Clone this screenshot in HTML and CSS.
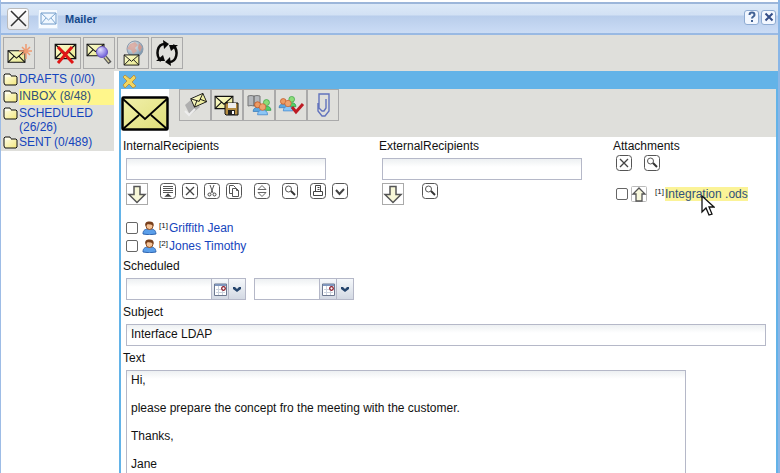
FILE: index.html
```html
<!DOCTYPE html>
<html lang="en">
<head>
<meta charset="utf-8">
<title>Mailer</title>
<link rel="stylesheet" href="styles.css">
</head>
<body>
<svg class="defs" aria-hidden="true">
  <defs>
    <linearGradient id="paper" x1="0" y1="0" x2="1" y2="1"><stop offset="0" stop-color="#fbfbd0"/><stop offset="1" stop-color="#e9e98e"/></linearGradient>
    <linearGradient id="fold" x1="0" y1="0" x2="1" y2="1"><stop offset="0" stop-color="#fffff0"/><stop offset="1" stop-color="#f3e77c"/></linearGradient>
    <linearGradient id="big" x1="0" y1="0" x2="1" y2="1"><stop offset="0" stop-color="#f1f0ac"/><stop offset="1" stop-color="#dfde78"/></linearGradient>
    <radialGradient id="glass" cx=".35" cy=".3" r=".7"><stop offset="0" stop-color="#e4e0ff"/><stop offset="1" stop-color="#7263dc"/></radialGradient>
    <radialGradient id="earth" cx=".35" cy=".3" r=".7"><stop offset="0" stop-color="#f0f5f7"/><stop offset="1" stop-color="#7c98ae"/></radialGradient>
  </defs>
  <symbol id="mail" viewBox="0 0 18 13"><path d="M1 1h16v11H1z" fill="url(#paper)" stroke="#111"/><path d="M1 1l8 7 8-7M1 12l6-6M17 12l-6-6" fill="none" stroke="#111"/></symbol>
  <symbol id="folder" viewBox="0 0 15 13"><path d="M1 10V2l1-1h5l1 2h5l1 1v7l-1 1H2z" fill="url(#fold)" stroke="#111"/><path d="M2 3h6" stroke="#fff"/></symbol>
  <symbol id="box" viewBox="0 0 16 16"><rect x=".5" y=".5" width="15" height="15" rx="3" fill="#fff" stroke="#555"/></symbol>
  <symbol id="cross" viewBox="0 0 16 16"><use href="#box"/><path d="M4 4l8 8M12 4l-8 8" stroke="#444" stroke-width="1.3"/></symbol>
  <symbol id="find" viewBox="0 0 16 16"><use href="#box"/><circle cx="6.500" cy="6" r="3" fill="#fff" stroke="#555"/><path d="M9 8l4 4" stroke="#333" stroke-width="2"/></symbol>
  <symbol id="down" viewBox="0 0 22 22"><rect x=".5" y=".5" width="21" height="21" fill="#fff" stroke="#aaa"/><path d="M8 3.500h6v8h5l-8 8-8-8h5z" fill="#f8f8d8" stroke="#555" stroke-width="1.500"/></symbol>
  <symbol id="person" viewBox="0 0 15 14"><path d="M1 13c0-4 2-5 6.500-5s6 1 6.500 5q-6.500 1.500-13 0z" fill="#5b9fea" stroke="#2f65b0"/><circle cx="7.500" cy="5" r="3.500" fill="#f5c397" stroke="#8c4e22"/><path d="M3.500 5C2 1 6 0 8 .5 12 .5 12 4 11.500 5 10 3 7 4 6 3z" fill="#78401c"/></symbol>
  <symbol id="cal" viewBox="0 0 13 13"><path d="M.5 1h12v11.500H.5z" fill="#fff" stroke="#6d7890"/><path d="M1 2h11" stroke="#7f96bd" stroke-width="2"/><path d="M2 6.500h9M2 9.500h9M4.500 3v9M8.500 3v9" stroke="#ccd3de"/><circle cx="9.500" cy="5.500" r="1.800" fill="#fff" stroke="#8c1c2b" stroke-width="1.300"/></symbol>
  <symbol id="chev" viewBox="0 0 10 7"><path d="M1 1h2l2 2 2-2h2v2L5 6 1 3z" fill="#26466e"/></symbol>
  <symbol id="users" viewBox="0 0 18 16"><g stroke-width=".7"><path d="M1 12c0-5 8-5 8 0z" fill="#5ca7e0" stroke="#397aba"/><circle cx="5" cy="6" r="2.700" fill="#ed9b63" stroke="#bf5424"/><path d="M10 11c0-5 7-5 7 0z" fill="#52cf67" stroke="#289a47"/><circle cx="13" cy="4" r="2.700" fill="#8bdc78" stroke="#40a54a"/><path d="M5 15c0-6 9-6 9 0z" fill="#8bc6f6" stroke="#4387cd"/><circle cx="9.500" cy="8" r="3" fill="#efa36f" stroke="#c76635"/></g></symbol>
</svg>

<div class="window">
  <header class="titlebar">
    <button class="close-tab" aria-label="Close tab"><svg width="21" height="21" viewBox="0 0 21 21"><path d="M3 3l15 15M18 3L3 18" stroke="#333" stroke-width="1.500"/></svg></button>
    <span class="app-icon"><svg width="17" height="13" viewBox="0 0 17 13"><path d="M1 1h15v11H1z" fill="#eff7ff" stroke="#6e9ac9"/><path d="M1 1l7.500 7L16 1M1 12l5-6M16 12l-5-6" fill="none" stroke="#7da7d1"/></svg></span>
    <h1>Mailer</h1>
    <button class="tool" aria-label="Help"><svg width="14" height="14" viewBox="0 0 14 14"><path d="M4.500 5c0-3.200 5-3.200 5 0 0 1.500-2.500 1.500-2.500 3.500M7 10v2" fill="none" stroke="#426295" stroke-width="2"/></svg></button>
    <button class="tool" aria-label="Close"><svg width="14" height="14" viewBox="0 0 14 14"><path d="M3.500 3.500l7 7M10.500 3.500l-7 7" stroke="#344e88" stroke-width="2"/></svg></button>
  </header>

  <nav class="toolbar" aria-label="Mail">
    <button class="first" aria-label="New mail"><svg width="30" height="30" viewBox="0 0 30 30"><use href="#mail" x="3" y="11" width="19" height="15"/><path d="M22 6v15M15 13h13M18 9l8 8M26 9l-8 8" stroke="#ef9a70" stroke-width="1.500"/></svg></button>
    <button aria-label="Delete mail"><svg width="30" height="30" viewBox="0 0 30 30"><use href="#mail" x="4" y="5" width="23" height="17"/><path d="M8 9l15 16M22 9L8 25" stroke="#df1515" stroke-width="3"/></svg></button>
    <button aria-label="Search mail"><svg width="30" height="30" viewBox="0 0 30 30"><use href="#mail" x="2" y="5" width="19" height="14"/><path d="M21 19l5 6" stroke="#555" stroke-width="4"/><path d="M21 19l4 5" stroke="#d6d0a0" stroke-width="1.500"/><circle cx="18" cy="14" r="5.500" fill="url(#glass)" stroke="#6c58bf"/></svg></button>
    <button aria-label="Fetch mail"><svg width="30" height="30" viewBox="0 0 30 30"><circle cx="17" cy="11" r="8" fill="url(#earth)" stroke="#8b9bad"/><path d="M12 6l5-2 3 3-3 3 2 3-4 3-2-4-4-1z" fill="#d9a297" opacity=".8"/><path d="M21 5l3 4-2 5-2-4z" fill="#ce9a90"/><use href="#mail" x="5" y="16" width="17" height="12"/></svg></button>
    <button aria-label="Refresh"><svg width="30" height="30" viewBox="0 0 30 30"><path d="M13 6C5 6 3 17 9 23M17 24c8 0 10-11 4-17" fill="none" stroke="#080808" stroke-width="2.500"/><path d="M11 2l6 4-5 5zM4 23h9l-2-6zM19 28l-6-4 5-5zM26 7h-9l2 6z" fill="#080808"/></svg></button>
  </nav>

  <div class="workspace">
    <aside>
      <ul class="folders">
        <li><svg width="15" height="13"><use href="#folder"/></svg><a href="#drafts">DRAFTS (0/0)</a></li>
        <li><svg width="15" height="13"><use href="#folder"/></svg><a class="current" href="#inbox">INBOX (8/48)</a></li>
        <li><svg width="15" height="13"><use href="#folder"/></svg><a href="#scheduled">SCHEDULED (26/26)</a></li>
        <li><svg width="15" height="13"><use href="#folder"/></svg><a href="#sent">SENT (0/489)</a></li>
      </ul>
    </aside>

    <main>
      <div class="pane-head"><button class="plain" aria-label="Close message"><svg width="15" height="15" viewBox="0 0 15 15"><path d="M3 1l5 4 4-4 2 3-4 4 4 4-3 2-4-4-4 4-2-3 4-4-4-4z" fill="#f3d660" stroke="#b2954c"/></svg></button></div>
      <div class="message-bar">
        <span class="big-mail"><svg width="48" height="36" viewBox="0 0 48 36"><rect x="1.500" y="1.500" width="45" height="32" rx="1" fill="url(#big)" stroke="#000" stroke-width="2.500"/><path d="M2 3l22 20L46 3M2 33l16-14M46 33L30 19" fill="none" stroke="#000" stroke-width="1.800"/></svg></span>
        <div class="actions">
          <button aria-label="Send"><svg width="30" height="30" viewBox="0 0 30 30"><path d="M5 15l8-7 7 9-10 8z" fill="#aaa" opacity=".9"/><path d="M5 21l4 4 6-6" fill="none" stroke="#eee" stroke-width="2"/><g transform="rotate(-24 18 10)"><use href="#mail" x="11" y="5" width="15" height="11"/></g></svg></button>
          <button aria-label="Save"><svg width="30" height="30" viewBox="0 0 30 30"><use href="#mail" x="2" y="5" width="20" height="15"/><path d="M13 13h13v12H14l-1-1z" fill="#b58d42" stroke="#111"/><path d="M16 13h8v5h-8z" fill="#eee"/><path d="M16 20h7v5h-7z" fill="#222"/><path d="M20 21h2v3h-2z" fill="#fff"/></svg></button>
          <button aria-label="Address book"><svg width="30" height="30" viewBox="0 0 30 30"><path d="M4 6q3-1 6 0 3-1 6 0v10q-3-1-6 0-3-1-6 0z" fill="#b5b8bc" stroke="#777"/><path d="M10 6v10" stroke="#555"/><use href="#users" x="8" y="8" width="20" height="18"/></svg></button>
          <button aria-label="Check recipients"><svg width="30" height="30" viewBox="0 0 30 30"><use href="#users" x="2" y="5" width="19" height="17"/><path d="M16 17l4 5 7-8" fill="none" stroke="#bd1b24" stroke-width="3"/></svg></button>
          <button aria-label="Attach file"><svg width="30" height="30" viewBox="0 0 30 30"><path d="M10 13v8l4 5h3l4-5V4H11v14l3 3h2l2-3V9" fill="none" stroke="#6273bd" stroke-width="1.400"/></svg></button>
        </div>
      </div>

      <form class="message">
        <div class="address-grid">
          <section>
            <label for="internal">InternalRecipients</label>
            <input class="field" id="internal" type="text">
            <div class="mini-tools">
              <button type="button" class="down" aria-label="Add internal recipient"><svg width="22" height="22"><use href="#down"/></svg></button>
              <span class="group">
                <button type="button" aria-label="List"><svg width="16" height="16" viewBox="0 0 16 16"><use href="#box"/><path d="M3 3.500h10M3 5.500h10M3 7.500h10M3 9.500h10" stroke="#555"/><path d="M4 14l4-4 4 4z" fill="#444" stroke="#fff" stroke-width=".5"/></svg></button>
                <button type="button" aria-label="Remove"><svg width="16" height="16"><use href="#cross"/></svg></button>
                <button type="button" aria-label="Cut"><svg width="16" height="16" viewBox="0 0 16 16"><use href="#box"/><path d="M6 2l3 8M10 2l-3 8" stroke="#555"/><circle cx="5.500" cy="11.500" r="1.500" fill="#fff" stroke="#444"/><circle cx="10.500" cy="11.500" r="1.500" fill="#fff" stroke="#444"/></svg></button>
                <button type="button" aria-label="Copy"><svg width="16" height="16" viewBox="0 0 16 16"><use href="#box"/><path d="M3.500 2.500h4l2 2v6h-6z" fill="#fff" stroke="#555"/><path d="M6.500 5.500h4l2 2v6h-6zM10.500 5.500v2h2" fill="#fff" stroke="#555"/></svg></button>
              </span>
              <button type="button" aria-label="Sort"><svg width="16" height="16" viewBox="0 0 16 16"><use href="#box"/><path d="M4 6.500l4-4 4 4zM4 9.500l4 4 4-4z" fill="#fff" stroke="#666"/></svg></button>
              <button type="button" aria-label="Search internal recipients"><svg width="16" height="16"><use href="#find"/></svg></button>
              <span class="group">
                <button type="button" aria-label="Print"><svg width="16" height="16" viewBox="0 0 16 16"><use href="#box"/><path d="M5.500 8.500v-6h5v6M3.500 8.500h9v4h-9zM7.500 4.500h2M7.500 6.500h2" fill="none" stroke="#444"/></svg></button>
                <button type="button" aria-label="Confirm"><svg width="16" height="16" viewBox="0 0 16 16"><use href="#box"/><path d="M4 7l3.500 4L12 6" fill="none" stroke="#444" stroke-width="2"/></svg></button>
              </span>
            </div>
            <ul class="people">
              <li><input type="checkbox" id="p1"><svg width="15" height="14"><use href="#person"/></svg><small>[1]</small><label for="p1">Griffith Jean</label></li>
              <li><input type="checkbox" id="p2"><svg width="15" height="14"><use href="#person"/></svg><small>[2]</small><label for="p2">Jones Timothy</label></li>
            </ul>
          </section>
          <section>
            <label for="external">ExternalRecipients</label>
            <input class="field" id="external" type="text">
            <div class="mini-tools external">
              <button type="button" class="down" aria-label="Add external recipient"><svg width="22" height="22"><use href="#down"/></svg></button>
              <button type="button" aria-label="Search external recipients"><svg width="16" height="16"><use href="#find"/></svg></button>
            </div>
          </section>
          <section class="attachments">
            <h2>Attachments</h2>
            <div class="mini-tools">
              <button type="button" aria-label="Remove attachment"><svg width="16" height="16"><use href="#cross"/></svg></button>
              <button type="button" aria-label="Search attachments"><svg width="16" height="16"><use href="#find"/></svg></button>
            </div>
            <div class="file">
              <input type="checkbox" aria-label="Select Integration .ods">
              <button type="button" class="plain" aria-label="Upload"><svg width="16" height="16" viewBox="0 0 16 16"><rect x=".5" y=".5" width="15" height="15" rx="1" fill="#fff" stroke="#bbb"/><path d="M8 2l6 6h-3v7H5V8H2z" fill="#f8f8dc" stroke="#555" stroke-width="1.300"/></svg></button>
              <small>[1]</small>
              <a href="#file">Integration .ods<svg class="pointer" width="14" height="21" viewBox="0 0 14 21"><path d="M1 1v16l4-4 3 7 3-1-3-7h5z" fill="#fff" stroke="#111" stroke-width="1.300"/></svg></a>
            </div>
          </section>
        </div>

        <label for="from-date">Scheduled</label>
        <div class="schedule">
          <div class="combo date"><input id="from-date" type="text"><button type="button" aria-label="Pick date"><svg width="13" height="13"><use href="#cal"/></svg></button><button type="button" aria-label="Date options"><svg width="10" height="7"><use href="#chev"/></svg></button></div>
          <div class="combo time"><input aria-label="Scheduled time" type="text"><button type="button" aria-label="Pick time"><svg width="13" height="13"><use href="#cal"/></svg></button><button type="button" aria-label="Time options"><svg width="10" height="7"><use href="#chev"/></svg></button></div>
        </div>
        <label for="subject">Subject</label>
        <input class="field subject" id="subject" type="text" value="Interface LDAP">
        <label for="body">Text</label>
        <textarea class="field" id="body">Hi,

please prepare the concept fro the meeting with the customer.

Thanks,

Jane</textarea>
      </form>
    </main>
  </div>
</div>
</body>
</html>
```

FILE: styles.css
```css
* { box-sizing: border-box; }
body { margin: 0; background: #fff; color: #111; font: 12px/14px "Liberation Sans", Arial, sans-serif; }
svg { display: block; flex: none; }
.defs { position: absolute; width: 0; height: 0; }
button { padding: 0; border: 0; background: none; display: flex; align-items: center; justify-content: center; flex: none; }
ul { list-style: none; margin: 0; padding: 0; }
a { color: #1545bd; text-decoration: none; }
input, textarea { font: inherit; color: inherit; margin: 0; }

.window { min-height: 100vh; display: flex; flex-direction: column; padding-top: 2px; border-left: 1px solid #9dbce6; border-right: 2px solid #8ab6e6; }
.titlebar { height: 33px; flex: none; display: flex; align-items: center; padding: 0 2px 0 6px; border-top: 2px solid #9cb6da; border-bottom: 2px solid #99b9e3; background: linear-gradient(#dce9f8, #d2e1f4 11px, #b8cdeb 12px, #cbdcf5); }
.titlebar h1 { flex: 1; margin: 0 0 0 7px; font-size: 11px; line-height: 14px; color: #15498b; }
.close-tab { width: 22px; height: 22px; border: 1px solid #bbb; border-radius: 3px; background: linear-gradient(#fff, #eee); }
.app-icon { width: 20px; height: 20px; margin-left: 9px; display: flex; align-items: center; justify-content: center; background: #f7fbff; border: 1px solid #d5e4f5; }
.tool { width: 15px; height: 15px; margin: 0 0 3px 2px; border: 1px solid #8eabd2; border-radius: 3px; background: #f2f7ff; }

.toolbar { height: 36px; flex: none; display: flex; gap: 2px; padding: 2px; background: #dfdfdb; }
.toolbar button, .actions button { width: 32px; height: 32px; border: 1px solid #aaa; }
.toolbar .first { margin-right: 12px; }

.workspace { flex: 1; display: flex; }
aside { width: 118px; flex: none; padding-right: 5px; }
.folders { background: #dfdfdb; display: grid; gap: 1px; padding-top: 1px; }
.folders li { display: flex; align-items: flex-start; padding-left: 2px; min-height: 16px; }
.folders svg { margin: 1px 1px 0 0; }
.folders a { flex: 1; align-self: stretch; }
.folders .current { background: #fff68b; color: #31527a; }

main { flex: 1; min-width: 0; display: flex; flex-direction: column; border: 0 solid #63b3e8; border-width: 0 2px; }
.pane-head { height: 18px; background: #63b3e8; padding: 3px 1px; }
.message-bar { height: 48px; display: flex; background: #dfdfdb; }
.big-mail { width: 48px; padding-top: 7px; background: #fff; }
.actions { display: flex; margin-left: 10px; }

.message { flex: 1; display: flex; flex-direction: column; padding: 2px 10px 0 2px; }
.message > label, section > label, h2 { display: block; height: 19px; margin: 0; font-size: 12px; font-weight: 400; line-height: 14px; }
.field { display: block; height: 22px; margin-left: 3px; padding: 0 4px 2px; border: 1px solid #b5b8c8; background: linear-gradient(#edf0f2, #fff 8px); outline: 0; }
.address-grid { display: grid; grid-template-columns: 256px 234px 1fr; margin-bottom: 4px; }
section .field { width: 200px; }
.mini-tools { display: flex; gap: 12px; margin: 3px 0 0 3px; }
.group { display: flex; gap: 6px; }
.mini-tools button { height: 16px; }
.mini-tools .down { height: 22px; }
.external { gap: 18px; }
.attachments h2 { height: 16px; }
.attachments .mini-tools { margin-top: 0; }
input[type="checkbox"] { appearance: none; width: 12px; height: 12px; border: 1px solid #666; border-radius: 2px; background: #fff; flex: none; }
small { font-size: 8px; line-height: 8px; align-self: flex-start; margin-top: 3px; }
.people { margin: 14px 0 0 3px; }
.people li { display: flex; align-items: center; height: 18px; }
.people svg { margin: 0 2px 0 4px; }
.people small { width: 10px; }
.people label { color: #1545bd; }
.file { display: flex; align-items: center; height: 18px; margin: 14px 0 0 3px; }
.file button { margin: 0 8px 0 3px; }
.file small { width: 10px; }
.file a { position: relative; background: #fbf397; color: #31527a; }
.pointer { position: absolute; left: 36px; top: 8px; }

.schedule { display: flex; gap: 8px; margin: 0 0 5px 3px; }
.combo { display: flex; height: 22px; border: 1px solid #b5b8c8; }
.date { width: 120px; }
.time { width: 100px; }
.combo input { flex: 1; width: 0; border: 0; padding: 0 4px; background: linear-gradient(#edf0f2, #fff 8px); }
.combo button { width: 17px; border-left: 1px solid #b5b8c8; background: linear-gradient(#f5f8fb, #d3d9e3); }
.subject { margin-bottom: 5px; }
textarea.field { flex: 1; width: calc(100% - 83px); padding: 2px 4px 0; border-bottom: 0; resize: none; overflow: hidden; line-height: 14px; }
```
